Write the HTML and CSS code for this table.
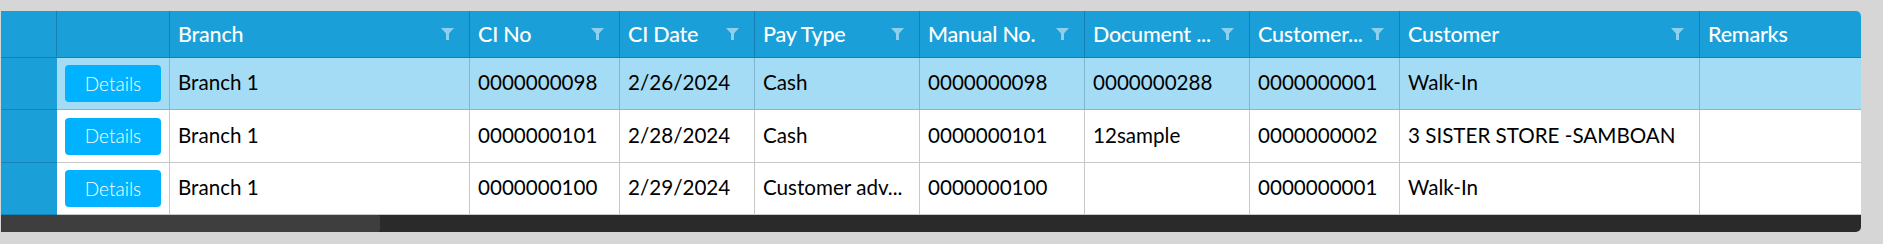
FILE: index.html
```html
<!DOCTYPE html>
<html>
<head>
<meta charset="utf-8">
<link rel="stylesheet" href="styles.css">
</head>
<body>
<div class="grid-wrap">
  <div class="grid">
    <div class="hcell rh"></div>
    <div class="hcell"></div>
    <div class="hcell"><span>Branch</span><svg class="filter" viewBox="0 0 13 12"><path d="M0 0H13L8 5.5V12H5V5.5Z"/></svg></div>
    <div class="hcell"><span>CI No</span><svg class="filter" viewBox="0 0 13 12"><path d="M0 0H13L8 5.5V12H5V5.5Z"/></svg></div>
    <div class="hcell"><span>CI Date</span><svg class="filter" viewBox="0 0 13 12"><path d="M0 0H13L8 5.5V12H5V5.5Z"/></svg></div>
    <div class="hcell"><span>Pay Type</span><svg class="filter" viewBox="0 0 13 12"><path d="M0 0H13L8 5.5V12H5V5.5Z"/></svg></div>
    <div class="hcell"><span>Manual No.</span><svg class="filter" viewBox="0 0 13 12"><path d="M0 0H13L8 5.5V12H5V5.5Z"/></svg></div>
    <div class="hcell"><span>Document ...</span><svg class="filter" viewBox="0 0 13 12"><path d="M0 0H13L8 5.5V12H5V5.5Z"/></svg></div>
    <div class="hcell"><span>Customer...</span><svg class="filter" viewBox="0 0 13 12"><path d="M0 0H13L8 5.5V12H5V5.5Z"/></svg></div>
    <div class="hcell"><span>Customer</span><svg class="filter" viewBox="0 0 13 12"><path d="M0 0H13L8 5.5V12H5V5.5Z"/></svg></div>
    <div class="hcell last"><span>Remarks</span></div>

    <div class="cell rh"></div>
    <div class="cell sel"><button class="details">Details</button></div>
    <div class="cell sel">Branch 1</div>
    <div class="cell sel">0000000098</div>
    <div class="cell sel">2/26/2024</div>
    <div class="cell sel">Cash</div>
    <div class="cell sel">0000000098</div>
    <div class="cell sel">0000000288</div>
    <div class="cell sel">0000000001</div>
    <div class="cell sel">Walk-In</div>
    <div class="cell sel last"></div>

    <div class="cell rh"></div>
    <div class="cell"><button class="details">Details</button></div>
    <div class="cell">Branch 1</div>
    <div class="cell">0000000101</div>
    <div class="cell">2/28/2024</div>
    <div class="cell">Cash</div>
    <div class="cell">0000000101</div>
    <div class="cell">12sample</div>
    <div class="cell">0000000002</div>
    <div class="cell">3 SISTER STORE -SAMBOAN</div>
    <div class="cell last"></div>

    <div class="cell rh"></div>
    <div class="cell"><button class="details">Details</button></div>
    <div class="cell">Branch 1</div>
    <div class="cell">0000000100</div>
    <div class="cell">2/29/2024</div>
    <div class="cell">Customer adv...</div>
    <div class="cell">0000000100</div>
    <div class="cell"></div>
    <div class="cell">0000000001</div>
    <div class="cell">Walk-In</div>
    <div class="cell last"></div>
  </div>
  <div class="hscroll"><div class="thumb"></div></div>
</div>
</body>
</html>
```

FILE: styles.css
```css
* { box-sizing: border-box; }
html, body { margin: 0; padding: 0; }
body {
  background: #d6d6d6;
  font-family: Lato, "Liberation Sans", sans-serif;
  height: 244px;
  overflow: hidden;
}
.grid-wrap {
  margin: 11px 0 0 1px;
  width: 1860px;
  border-radius: 0 5px 5px 0;
  overflow: hidden;
  background: #fff;
}
.grid {
  display: grid;
  grid-template-columns: 56px 113px 300px 150px 135px 165px 165px 165px 150px 300px 161px;
  grid-template-rows: 47px 52px 53px 52px;
}
.hcell {
  background: #1a9fd8;
  color: #fff;
  font-size: 21.5px;
  font-weight: 500;
  letter-spacing: -0.2px;
  border-right: 1px solid #1480b6;
  border-bottom: 1px solid #1480b6;
  display: flex;
  align-items: center;
  justify-content: space-between;
  padding: 0 15px 1px 8px;
  white-space: nowrap;
  overflow: hidden;
}
.hcell.last { border-right: none; }
.filter {
  width: 13px;
  height: 12px;
  flex: none;
  fill: rgba(255, 255, 255, 0.5);
}
.cell {
  background: #fff;
  color: #000;
  font-size: 20.6px;
  border-right: 1px solid #c8c8c8;
  border-bottom: 1px solid #c8c8c8;
  display: flex;
  align-items: center;
  padding: 0 8px 3px 8px;
  white-space: nowrap;
  overflow: hidden;
}
.cell.last { border-right: none; }
.cell.sel {
  background: #a5dcf5;
  border-right-color: #82b6d0;
  border-bottom-color: #82b6d0;
}
.cell.sel.last { border-right: none; }
.cell.rh {
  background: #1a9fd8;
  border-right: none;
  border-bottom: 1px solid #1683b8;
}
.details {
  width: 96px;
  height: 37px;
  border: none;
  border-radius: 4px;
  background: #00b2ff;
  color: #fff;
  font-family: Lato, "Liberation Sans", sans-serif;
  font-size: 19px;
  font-weight: 300;
  padding: 0 0 1px 0;
  margin-top: 3px;
}
.hscroll {
  height: 17px;
  background: #2a2a2a;
  display: flex;
}
.thumb {
  width: 379px;
  height: 17px;
  background: #3e3e3e;
  border-radius: 0 2px 2px 0;
}
```
